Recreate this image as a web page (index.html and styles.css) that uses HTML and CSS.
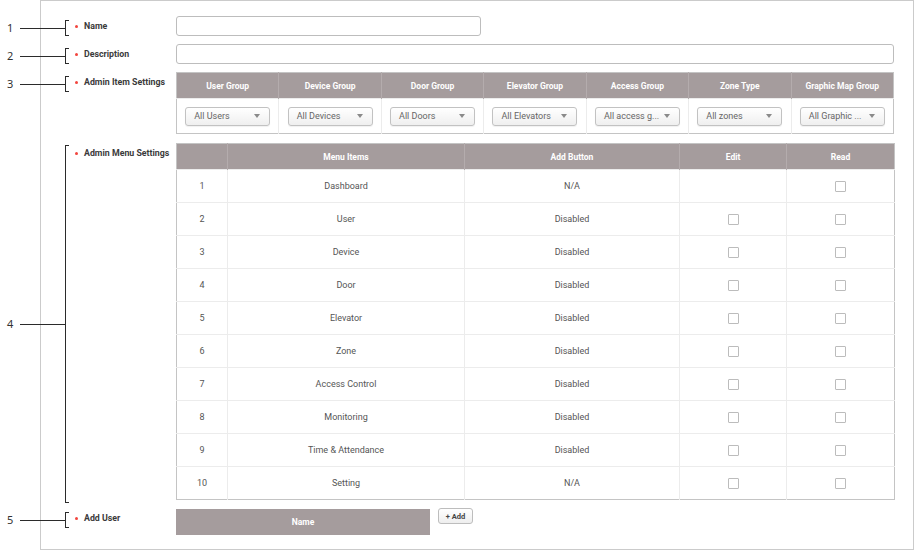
FILE: index.html
```html
<!DOCTYPE html>
<html>
<head>
<meta charset="utf-8">
<link rel="stylesheet" href="styles.css">
</head>
<body>
<div class="panel">
  <div class="row row-name">
    <div class="callout"><span class="num">1</span><span class="lead"></span><span class="brace"></span></div>
    <div class="label"><span class="dot"></span>Name</div>
    <div class="field"><input class="input input-short" type="text"></div>
  </div>

  <div class="row">
    <div class="callout"><span class="num">2</span><span class="lead"></span><span class="brace"></span></div>
    <div class="label"><span class="dot"></span>Description</div>
    <div class="field"><input class="input input-full" type="text"></div>
  </div>

  <div class="row">
    <div class="callout"><span class="num">3</span><span class="lead"></span><span class="brace"></span></div>
    <div class="label"><span class="dot"></span>Admin Item Settings</div>
    <div class="field">
      <table class="grid items">
        <thead>
          <tr><th>User Group</th><th>Device Group</th><th>Door Group</th><th>Elevator Group</th><th>Access Group</th><th>Zone Type</th><th>Graphic Map Group</th></tr>
        </thead>
        <tbody>
          <tr>
            <td><div class="select"><span>All Users</span><i class="caret"></i></div></td>
            <td><div class="select"><span>All Devices</span><i class="caret"></i></div></td>
            <td><div class="select"><span>All Doors</span><i class="caret"></i></div></td>
            <td><div class="select"><span>All Elevators</span><i class="caret"></i></div></td>
            <td><div class="select"><span>All access g...</span><i class="caret"></i></div></td>
            <td><div class="select"><span>All zones</span><i class="caret"></i></div></td>
            <td><div class="select"><span>All Graphic ...</span><i class="caret"></i></div></td>
          </tr>
        </tbody>
      </table>
    </div>
  </div>

  <div class="row row-menu">
    <div class="callout callout-tall"><span class="num">4</span><span class="lead"></span><span class="brace"></span></div>
    <div class="label"><span class="dot"></span>Admin Menu Settings</div>
    <div class="field">
      <table class="grid menu">
        <colgroup><col class="c-no"><col class="c-item"><col class="c-add"><col class="c-edit"><col class="c-read"></colgroup>
        <thead>
          <tr><th></th><th>Menu Items</th><th>Add Button</th><th>Edit</th><th>Read</th></tr>
        </thead>
        <tbody>
          <tr><td>1</td><td>Dashboard</td><td>N/A</td><td></td><td><span class="check"></span></td></tr>
          <tr><td>2</td><td>User</td><td>Disabled</td><td><span class="check"></span></td><td><span class="check"></span></td></tr>
          <tr><td>3</td><td>Device</td><td>Disabled</td><td><span class="check"></span></td><td><span class="check"></span></td></tr>
          <tr><td>4</td><td>Door</td><td>Disabled</td><td><span class="check"></span></td><td><span class="check"></span></td></tr>
          <tr><td>5</td><td>Elevator</td><td>Disabled</td><td><span class="check"></span></td><td><span class="check"></span></td></tr>
          <tr><td>6</td><td>Zone</td><td>Disabled</td><td><span class="check"></span></td><td><span class="check"></span></td></tr>
          <tr><td>7</td><td>Access Control</td><td>Disabled</td><td><span class="check"></span></td><td><span class="check"></span></td></tr>
          <tr><td>8</td><td>Monitoring</td><td>Disabled</td><td><span class="check"></span></td><td><span class="check"></span></td></tr>
          <tr><td>9</td><td>Time &amp; Attendance</td><td>Disabled</td><td><span class="check"></span></td><td><span class="check"></span></td></tr>
          <tr><td>10</td><td>Setting</td><td>N/A</td><td><span class="check"></span></td><td><span class="check"></span></td></tr>
        </tbody>
      </table>
    </div>
  </div>

  <div class="row row-user">
    <div class="callout"><span class="num">5</span><span class="lead"></span><span class="brace"></span></div>
    <div class="label"><span class="dot"></span>Add User</div>
    <div class="field field-user">
      <div class="name-head">Name</div>
      <button class="btn-add" type="button">+ Add</button>
    </div>
  </div>
</div>
</body>
</html>
```

FILE: styles.css
```css
* { box-sizing: border-box; }

html, body {
  margin: 0;
  padding: 0;
  background: #ffffff;
}

body {
  font-family: Roboto, "Liberation Sans", Arial, sans-serif;
  color: #555;
  width: 915px;
  height: 551px;
  overflow: hidden;
}

.panel {
  margin-left: 40px;
  width: 874px;
  height: 550px;
  border: 1px solid #cbcbcb;
  padding: 15px 18px 0 0;
  display: flex;
  flex-direction: column;
  gap: 8px;
}

.row {
  position: relative;
  display: flex;
  align-items: flex-start;
}

.row-menu { margin-top: 1px; }

.label {
  width: 135px;
  flex: none;
  padding-left: 34px;
  padding-top: 1px;
  line-height: 18px;
  font-size: 8.8px;
  font-weight: 700;
  color: #3a3a3a;
  display: flex;
  align-items: center;
  white-space: nowrap;
}

.dot {
  width: 3px;
  height: 3px;
  border-radius: 50%;
  background: #f2453d;
  margin-right: 6px;
  flex: none;
}

.field { flex: 1; display: flex; }

/* callouts: lie over the panel's left edge */
.callout {
  position: absolute;
  left: -41px;
  top: 4px;
  width: 70px;
  height: 16px;
  display: flex;
  align-items: center;
}

.callout-tall {
  top: 2px;
  height: 358px;
}

.num {
  width: 20px;
  padding-left: 7px;
  font-family: "Noto Sans", "DejaVu Sans", sans-serif;
  font-size: 11px;
  color: #333;
  line-height: 12px;
}

.lead {
  width: 45px;
  height: 0;
  border-top: 1px solid #2b2b2b;
}

.brace {
  width: 4px;
  height: 100%;
  border: 1px solid #2b2b2b;
  border-right: none;
}

.input {
  height: 20px;
  border: 1px solid #bdbdbd;
  border-radius: 3px;
  background: #fff;
  margin: 0;
  padding: 0 6px;
}

.input-short { width: 305px; }
.input-full { width: 718px; }

/* tables */
.grid {
  width: 718px;
  border-collapse: collapse;
  table-layout: fixed;
  border: 1px solid #c4c4c4;
  font-size: 9px;
}

.grid th {
  height: 26px;
  padding: 0;
  background: #a59c9d;
  color: #fff;
  font-weight: 700;
  font-size: 8.5px;
  text-align: center;
  border-left: 1px solid #b4acad;
}

.grid th:first-child { border-left: none; }

.grid td {
  padding: 0;
  text-align: center;
  color: #555;
  border-left: 1px solid #ececec;
  border-top: 1px solid #ececec;
}

.grid td:first-child { border-left: none; }

.items td { height: 35px; }

.menu td { height: 33px; }

.c-no { width: 51px; }
.c-item { width: 237px; }
.c-add { width: 215px; }
.c-edit { width: 107px; }
.c-read { width: 108px; }

.select {
  margin: 0 auto;
  width: 85px;
  height: 19px;
  border: 1px solid #c2c2c2;
  border-radius: 3px;
  background: linear-gradient(#ffffff, #efefef);
  box-shadow: 0 1px 1px rgba(0,0,0,0.06);
  display: flex;
  align-items: center;
  justify-content: space-between;
  padding: 0 9px 0 8px;
  text-align: left;
  color: #666;
  font-size: 9px;
  white-space: nowrap;
}

.caret {
  width: 0;
  height: 0;
  border-left: 3.5px solid transparent;
  border-right: 3.5px solid transparent;
  border-top: 4px solid #8a8a8a;
  flex: none;
}

.check {
  display: inline-block;
  width: 11px;
  height: 11px;
  border: 1px solid #bcbcbc;
  border-radius: 1px;
  background: #fff;
  vertical-align: middle;
}

.field-user { gap: 8px; align-items: flex-start; }

.name-head {
  width: 254px;
  height: 26px;
  margin-top: 1px;
  background: #a59c9d;
  color: #fff;
  font-weight: 700;
  font-size: 8.5px;
  display: flex;
  align-items: center;
  justify-content: center;
}

.btn-add {
  width: 35px;
  height: 16px;
  border: 1px solid #bdbdbd;
  border-radius: 3px;
  background: linear-gradient(#ffffff, #eeeeee);
  font-family: Roboto, "Liberation Sans", Arial, sans-serif;
  font-weight: 700;
  font-size: 7.5px;
  color: #444;
  padding: 0;
  margin: 0;
}
```
